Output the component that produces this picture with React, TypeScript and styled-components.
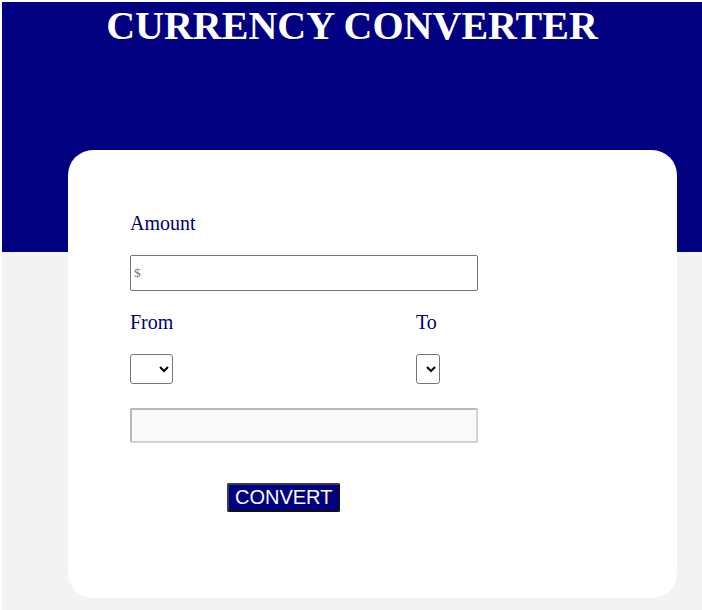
import React from "react";
import styled, { createGlobalStyle } from "styled-components";

const GlobalStyle = createGlobalStyle`
  html, body {
    margin: 0;
    padding: 0;
    background: #ffffff;
    font-family: "Liberation Serif", "Times New Roman", serif;
  }
`;

const Page = styled.div`
  width: 700px;
  height: 608px;
  margin: 2px 0 0 2px;
  background: linear-gradient(#000080 0, #000080 250px, #f3f3f3 250px);
  display: flex;
  flex-direction: column;
`;

const Title = styled.h1`
  margin: 1px 0 0;
  text-align: center;
  color: #ffffff;
  font-family: "Liberation Serif", "Times New Roman", serif;
  font-size: 40px;
  font-weight: bold;
  line-height: 46px;
`;

const Card = styled.main`
  margin: 101px 0 0 66px;
  width: 609px;
  height: 448px;
  box-sizing: border-box;
  background: #ffffff;
  border-radius: 25px;
  padding: 62px 0 0 62px;
  display: flex;
  flex-direction: column;
  align-items: flex-start;
`;

const Label = styled.label`
  display: block;
  color: #000070;
  font-size: 20px;
  line-height: 23px;
`;

const AmountInput = styled.input`
  margin-top: 20px;
  width: 348px;
  height: 36px;
  box-sizing: border-box;
  border: 1px solid #767676;
  border-radius: 2px;
  padding: 1px 3px;
  font-family: "Liberation Serif", "Times New Roman", serif;
  font-size: 13.33px;
  outline: none;
  &::placeholder {
    color: #757575;
  }
`;

const CurrencyRow = styled.div`
  margin-top: 20px;
  display: grid;
  grid-template-columns: 286px auto;
  row-gap: 20px;
`;

const Select = styled.select<{ $w: number }>`
  width: ${(p) => p.$w}px;
  height: 30px;
  box-sizing: border-box;
  border: 1px solid #767676;
  border-radius: 3px;
  background: #ffffff;
  font-size: 13.33px;
  padding: 0;
`;

const Result = styled.div`
  margin-top: 24px;
  width: 348px;
  height: 35px;
  box-sizing: border-box;
  background: #f9f9f9;
  border: 2px solid;
  border-color: #b9b9b9 #d2d2d2 #d2d2d2 #b9b9b9;
  border-radius: 2px;
`;

const ConvertButton = styled.button`
  margin: 40px 0 0 97px;
  height: 29px;
  box-sizing: border-box;
  padding: 1px 6px;
  background: #000080;
  color: #ffffff;
  border: 2px solid;
  border-color: #3a3a5a #111111 #111111 #3a3a5a;
  border-radius: 2px;
  font-family: "Liberation Sans", Arial, sans-serif;
  font-size: 20px;
  line-height: 23px;
  cursor: pointer;
`;

export default function App() {
  return (
    <>
      <GlobalStyle />
      <Page>
        <Title>CURRENCY CONVERTER</Title>
        <Card>
          <Label htmlFor="amount">Amount</Label>
          <AmountInput id="amount" placeholder="$" />
          <CurrencyRow>
            <Label htmlFor="from">From</Label>
            <Label htmlFor="to">To</Label>
            <Select id="from" $w={43}>
              <option value=""></option>
            </Select>
            <Select id="to" $w={24}>
              <option value=""></option>
            </Select>
          </CurrencyRow>
          <Result />
          <ConvertButton type="button">CONVERT</ConvertButton>
        </Card>
      </Page>
    </>
  );
}
